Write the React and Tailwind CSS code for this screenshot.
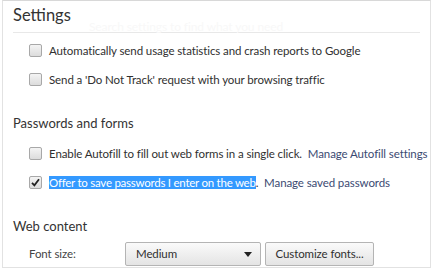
import React from 'react';

const Box = ({ checked }) => (
  <span className="w-[13px] h-[13px] shrink-0 rounded-[2px] border border-[#a8a8a8] bg-gradient-to-b from-[#f4f4f4] to-[#dcdcdc] flex items-center justify-center">
    {checked && (
      <svg width="9" height="9" viewBox="0 0 9 9">
        <path d="M1 4.8 L3.4 7.3 L8 1.3" fill="none" stroke="#222" strokeWidth="1.8" />
      </svg>
    )}
  </span>
);

const Row = ({ checked, children }) => (
  <div className="flex items-center gap-[7px] pl-[26px] h-[29px]">
    <Box checked={checked} />
    <div className="whitespace-nowrap">{children}</div>
  </div>
);

const App = () => {
  return (
    <div className="w-[434px] h-[269px] bg-white overflow-hidden font-['Lato',sans-serif] text-[11.5px] tracking-[-0.1px] text-[#303030]">
      <div className="ml-[2px] w-[429px] h-[268px] border border-[#e2e2e2] border-t-[#d8d8d8]">
        {/* Header */}
        <div className="relative mx-[10px] h-[32px] border-b border-[#e8e8e8] pt-[2px]">
          <h1 className="text-[16.5px] tracking-normal leading-[24px] text-[#333]">Settings</h1>
          <span className="absolute left-[76px] top-[17px] text-[12px] text-[#f8f8f8]">Search settings to find what you need</span>
        </div>

        <div className="pt-[3px]">
          <Row>Automatically send usage statistics and crash reports to Google</Row>
          <Row>Send a 'Do Not Track' request with your browsing traffic</Row>
        </div>

        <h2 className="pl-[10px] mt-[19px] text-[13px] tracking-normal leading-[20px] text-[#333]">Passwords and forms</h2>

        <div className="mt-[6px]">
          <Row>
            Enable Autofill to fill out web forms in a single click.{' '}
            <span className="text-[#3b4a72] ml-[3px]">Manage Autofill settings</span>
          </Row>
          <Row checked>
            <span className="bg-[#3399ff] text-white tracking-[-0.25px]">Offer to save passwords I enter on the web</span>.{' '}
            <span className="text-[#3b4a72] ml-[3px]">Manage saved passwords</span>
          </Row>
        </div>

        <h2 className="pl-[10px] mt-[19px] text-[13px] tracking-normal leading-[20px] text-[#333]">Web content</h2>

        <div className="flex items-center mt-[6px] pl-[26px]">
          <span className="w-[96px] text-[#444]">Font size:</span>
          <div className="w-[136px] h-[24px] flex items-center justify-between pl-[10px] pr-[8px] border border-[#b4b4b4] rounded-[2px] bg-gradient-to-b from-[#fafafa] to-[#e4e4e4]">
            <span>Medium</span>
            <svg width="8" height="5" viewBox="0 0 8 5">
              <path d="M0 0 H8 L4 5 Z" fill="#222" />
            </svg>
          </div>
          <div className="ml-[4px] w-[109px] h-[24px] flex items-center justify-center border border-[#b4b4b4] rounded-[2px] bg-gradient-to-b from-[#fafafa] to-[#e4e4e4]">
            Customize fonts...
          </div>
        </div>
      </div>
    </div>
  );
};

export default App;
